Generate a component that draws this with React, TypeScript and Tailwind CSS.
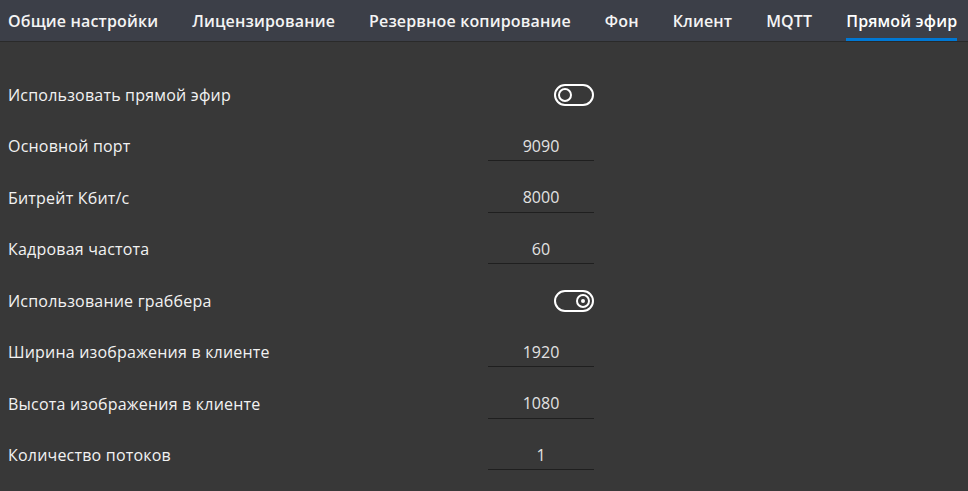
import { useState } from "react";

const tabs = [
  "Общие настройки",
  "Лицензирование",
  "Резервное копирование",
  "Фон",
  "Клиент",
  "MQTT",
  "Прямой эфир",
];

type Row =
  | { label: string; kind: "toggle"; on: boolean }
  | { label: string; kind: "input"; value: string };

const rows: Row[] = [
  { label: "Использовать прямой эфир", kind: "toggle", on: false },
  { label: "Основной порт", kind: "input", value: "9090" },
  { label: "Битрейт Кбит/с", kind: "input", value: "8000" },
  { label: "Кадровая частота", kind: "input", value: "60" },
  { label: "Использование граббера", kind: "toggle", on: true },
  { label: "Ширина изображения в клиенте", kind: "input", value: "1920" },
  { label: "Высота изображения в клиенте", kind: "input", value: "1080" },
  { label: "Количество потоков", kind: "input", value: "1" },
];

function Toggle({ on }: { on: boolean }) {
  return (
    <div
      className={`flex h-[22px] w-[40px] items-center rounded-full border-2 border-white px-[2px] ${
        on ? "justify-end" : "justify-start"
      }`}
    >
      <div className="flex h-[14px] w-[14px] items-center justify-center rounded-full border-2 border-white">
        {on && <div className="h-[4px] w-[4px] rounded-full bg-white" />}
      </div>
    </div>
  );
}

export default function App() {
  const [active] = useState(6);

  return (
    <div
      className="h-[491px] w-[968px] overflow-hidden bg-[#383838] text-white"
      style={{ fontFamily: '"Open Sans", "Noto Sans", sans-serif' }}
    >
      {/* Tabs */}
      <div className="flex h-[42px] items-stretch gap-[34px] border-b border-[#2a2a2a] bg-[#3c3f48] pl-[8px]">
        {tabs.map((t, i) => (
          <div
            key={t}
            className={`flex items-center border-b-[3px] pt-[3px] text-[16px] font-semibold tracking-[0.15px] ${
              i === active ? "border-[#0078d4] text-white" : "border-transparent text-[#f4f4f4]"
            }`}
          >
            {t}
          </div>
        ))}
      </div>

      {/* Settings */}
      <div className="flex w-[594px] flex-col pl-[8px] pt-[27px]">
        {rows.map((r) => (
          <div key={r.label} className="flex h-[51.5px] items-center justify-between">
            <span className="text-[16px] text-[#f2f2f2] tracking-[0.2px]">{r.label}</span>
            {r.kind === "toggle" ? (
              <Toggle on={r.on} />
            ) : (
              <div className="flex h-[30px] w-[106px] items-center justify-center border-b border-[#1f1f1f] text-[16px] text-[#e2e2e2]">
                {r.value}
              </div>
            )}
          </div>
        ))}
      </div>
    </div>
  );
}
